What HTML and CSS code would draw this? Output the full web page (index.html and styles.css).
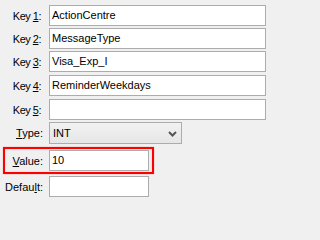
FILE: index.html
```html
<!DOCTYPE html>
<html>
<head>
<meta charset="utf-8">
<link rel="stylesheet" href="styles.css">
</head>
<body>
<div class="form">
  <div class="row">
    <label class="lbl key">Key <u>1</u>:</label>
    <div class="field wide">ActionCentre</div>
  </div>
  <div class="row">
    <label class="lbl key">Key <u>2</u>:</label>
    <div class="field wide">MessageType</div>
  </div>
  <div class="row">
    <label class="lbl key">Key <u>3</u>:</label>
    <div class="field wide">Visa_Exp_I</div>
  </div>
  <div class="row gap3">
    <label class="lbl key">Key <u>4</u>:</label>
    <div class="field wide">ReminderWeekdays</div>
  </div>
  <div class="row gap3">
    <label class="lbl key">Key <u>5</u>:</label>
    <div class="field wide"></div>
  </div>
  <div class="row tall">
    <label class="lbl"><u>T</u>ype:</label>
    <div class="select">
      <span>INT</span>
      <svg class="chev" width="9" height="6" viewBox="0 0 9 6"><polyline points="1,1 4.5,4.5 8,1" fill="none" stroke="#555" stroke-width="2"/></svg>
    </div>
  </div>
  <div class="row value">
    <label class="lbl"><u>V</u>alue:</label>
    <div class="field short">10</div>
    <span class="mark"></span>
  </div>
  <div class="row deflt">
    <label class="lbl">Defau<u>l</u>t:</label>
    <div class="field short"></div>
  </div>
</div>
</body>
</html>
```
FILE: styles.css
```css
html, body {
  margin: 0;
  background: #f0f0f0;
}
body {
  width: 271px;
  height: 202px;
  overflow: hidden;
  font-family: "Liberation Sans", Arial, sans-serif;
  font-size: 11px;
  color: #000;
}
.form {
  display: flex;
  flex-direction: column;
  gap: 2px;
  padding-top: 5px;
}
.row {
  display: flex;
  align-items: center;
  height: 21px;
  position: relative;
}
.row.gap3 { margin-top: 1px; }
.row.tall { height: 22px; }
.row.value { margin-top: 4px; }
.row.deflt { margin-top: 3px; }
.lbl {
  width: 49px;
  box-sizing: border-box;
  text-align: right;
  padding-right: 6px;
  white-space: nowrap;
}
.lbl.key {
  padding-right: 8px;
  letter-spacing: -0.5px;
}
.field {
  height: 21px;
  box-sizing: border-box;
  border: 1px solid #acacac;
  background: #fff;
  padding: 0 2px;
  line-height: 19px;
  white-space: nowrap;
  overflow: hidden;
}
.field.wide { width: 217px; }
.field.short { width: 100px; }
.select {
  width: 133px;
  height: 22px;
  box-sizing: border-box;
  border: 1px solid #acacac;
  background: linear-gradient(#f2f2f2, #e6e6e6);
  display: flex;
  align-items: center;
  justify-content: space-between;
  padding: 0 4px 0 3px;
}
.chev { display: block; margin-top: 1px; }
.mark {
  position: absolute;
  left: 3px;
  top: -3px;
  width: 151px;
  height: 27px;
  box-sizing: border-box;
  border: 2px solid #ff0000;
  box-shadow: 0 0 1px rgba(255, 0, 0, 0.5), inset 0 0 1px rgba(255, 0, 0, 0.5);
  pointer-events: none;
}
```
